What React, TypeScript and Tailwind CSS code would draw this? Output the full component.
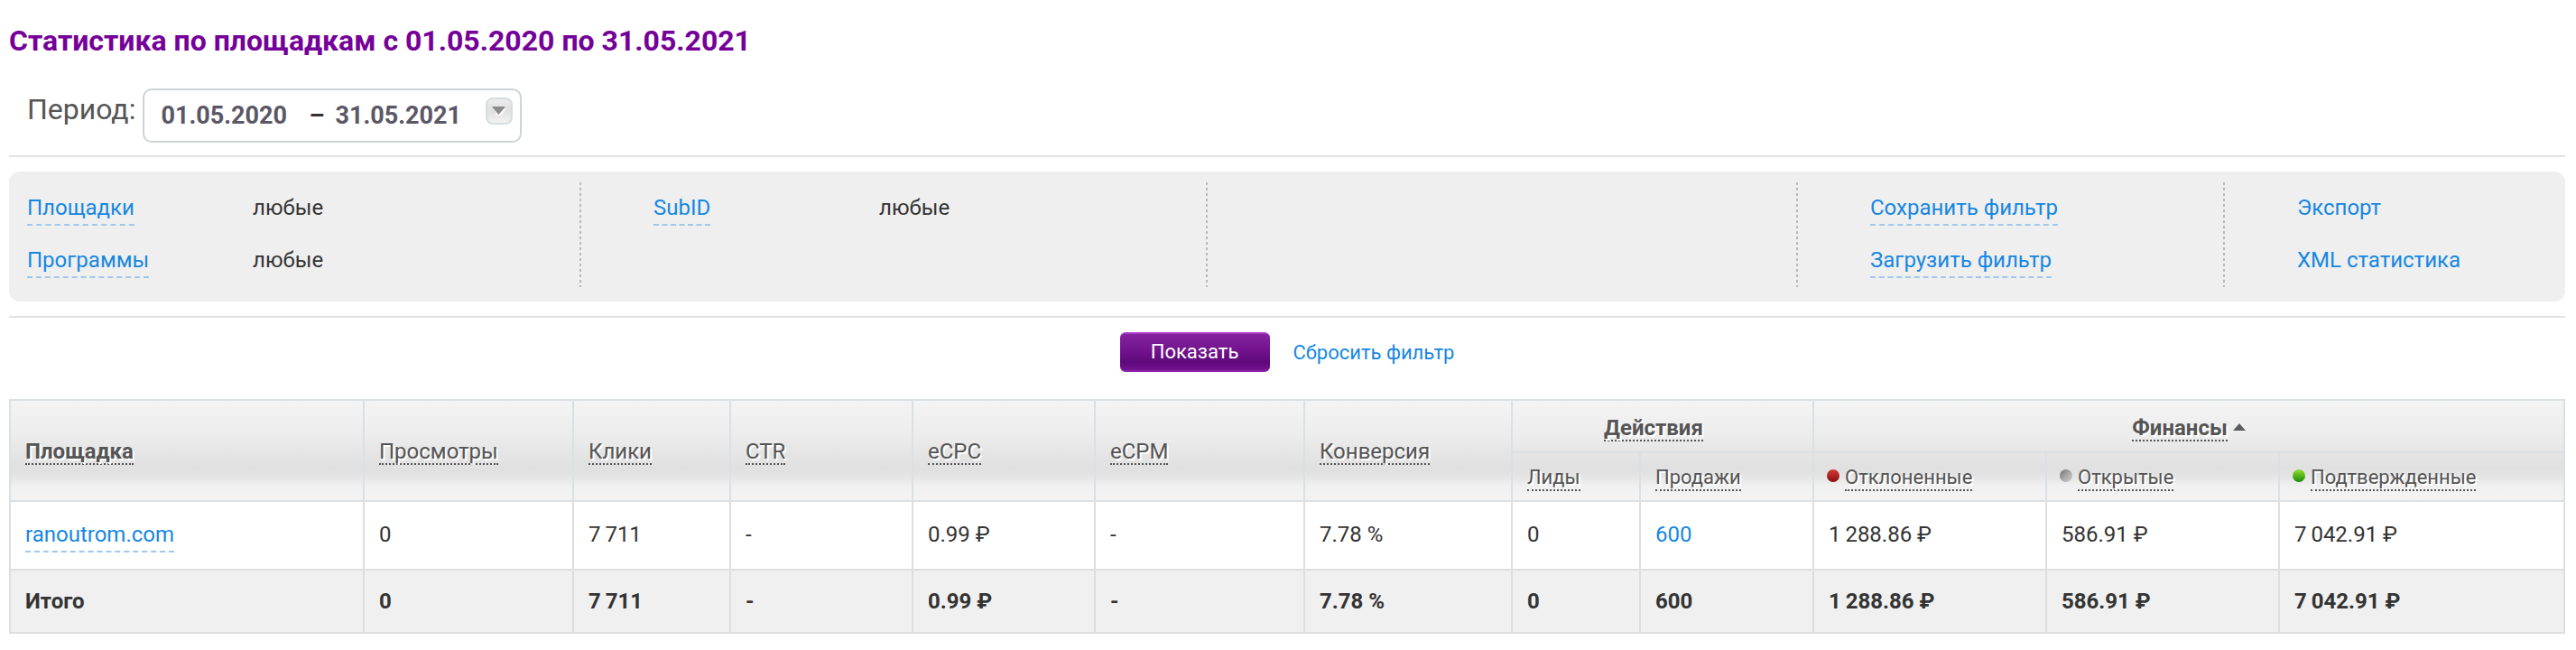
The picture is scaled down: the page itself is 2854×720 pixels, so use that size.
import type { ReactNode } from "react";

const COLUMN_WIDTHS = [
  "w-[392px]", "w-[232px]", "w-[174px]", "w-[202px]", "w-[202px]", "w-[232px]",
  "w-[230px]", "w-[142px]", "w-[192px]", "w-[258px]", "w-[258px]", "w-[316px]",
];

const ROW = ["0", "7\u2009711", "-", "0.99 ₽", "-", "7.78 %", "0", "600", "1\u2009288.86 ₽", "586.91 ₽", "7\u2009042.91 ₽"];

function DashedLink({ children }: { children: ReactNode }) {
  return (
    <a href="#" className="inline-block border-b-2 border-dashed border-[#a0c8ee] leading-9 text-[#1787e0]">
      {children}
    </a>
  );
}

function PlainLink({ children }: { children: ReactNode }) {
  return (
    <a href="#" className="inline-block leading-9 text-[#1787e0]">
      {children}
    </a>
  );
}

function FilterRow({ name }: { name: string }) {
  return (
    <div className="flex h-[58px] items-start">
      <div className="w-[250px]">
        <DashedLink>{name}</DashedLink>
      </div>
      <span className="leading-9">любые</span>
    </div>
  );
}

function Divider() {
  return (
    <div className="w-0.5 shrink-0 bg-[repeating-linear-gradient(to_bottom,#b9b9b9_0px,#b9b9b9_3px,transparent_3px,transparent_6px)]" />
  );
}

function FilterColumn({ first, last, children }: { first?: boolean; last?: boolean; children?: ReactNode }) {
  return (
    <div className="flex h-[116px]">
      <div className={`flex-1 pt-2.5 ${first ? "pl-5" : "pl-20"}`}>{children}</div>
      {!last && <Divider />}
    </div>
  );
}

function Sortable({ bold, children }: { bold?: boolean; children: ReactNode }) {
  return (
    <button
      type="button"
      className={`inline-block border-b-2 border-dotted border-[#555] leading-[26px] [text-shadow:2px_2px_0_#fff] ${bold ? "font-bold" : "font-normal"}`}
    >
      {children}
    </button>
  );
}

const headCell = "border-2 border-[#dbe0e4] px-4 text-left align-middle";

function MainHead({ bold, children }: { bold?: boolean; children: ReactNode }) {
  return (
    <th rowSpan={2} scope="col" className={`${headCell} pt-0.5`}>
      <Sortable bold={bold}>{children}</Sortable>
    </th>
  );
}

function SubHead({ dot, children }: { dot?: string; children: ReactNode }) {
  return (
    <th scope="col" className={`h-[54px] pt-1 text-[22px] ${headCell}`}>
      <div className="flex items-start gap-1.5">
        {dot && <span className={`mt-1 -ml-0.5 size-3.5 shrink-0 rounded-full ${dot}`} />}
        <Sortable>{children}</Sortable>
      </div>
    </th>
  );
}

function GroupHead({ span, sorted, children }: { span: number; sorted?: boolean; children: ReactNode }) {
  return (
    <th colSpan={span} scope="colgroup" className="h-[58px] border-2 border-[#dbe0e4] pt-1.5 align-middle">
      <div className="flex items-start justify-center gap-1.5">
        <Sortable bold>{children}</Sortable>
        <svg viewBox="0 0 14 8" className="mt-2 h-2 w-3.5" aria-hidden="true">
          {sorted && <path d="M0 8 L7 0 L14 8 Z" fill="#5c5c5c" />}
        </svg>
      </div>
    </th>
  );
}

const bodyCell = "border-2 border-[#dedede] px-4 align-middle";

export default function App() {
  return (
    <main className="bg-white pt-[25px] pr-3 pl-2.5 font-[Roboto,sans-serif] text-[24px] text-[#333]">
      <h1 className="text-[32px] leading-10 font-bold text-[#750099]">
        Статистика по площадкам с 01.05.2020 по 31.05.2021
      </h1>

      <div className="mt-[33px] flex items-start gap-2 pl-5">
        <label htmlFor="date-from" className="text-[32px] leading-[46px] text-[#555]">
          Период:
        </label>
        <div className="flex h-[60px] w-[420px] items-center rounded-[10px] border-2 border-[#cdd3d8] pl-[18px] text-[27px] font-bold text-[#5b5766]">
          <input id="date-from" aria-label="Дата начала" defaultValue="01.05.2020" className="w-[164px] outline-none" />
          <span className="w-[29px] text-[#333]">–</span>
          <input id="date-to" aria-label="Дата окончания" defaultValue="31.05.2021" className="w-[167px] outline-none" />
          <button
            type="button"
            aria-label="Открыть календарь"
            className="mt-2 flex size-[30px] items-center justify-center self-start rounded-lg border-2 border-[#d6dde0] bg-linear-to-b from-[#ececec] via-[#e0e0e0] to-[#f3f3f3]"
          >
            <svg viewBox="0 0 16 10" className="h-2.5 w-4" aria-hidden="true">
              <path d="M3 9 L10 10 L16 2 Z" fill="#fff" />
              <path d="M0 0 H15 L7.5 9 Z" fill="#8b8b8b" />
            </svg>
          </button>
        </div>
      </div>

      <hr className="mt-3.5 border-t-2 border-[#e2e2e2]" />

      <section className="mt-4 grid h-36 grid-cols-[634fr_694fr_654fr_473fr_377fr] rounded-[12px] bg-[#efefef] pt-3">
        <FilterColumn first>
          <FilterRow name="Площадки" />
          <FilterRow name="Программы" />
        </FilterColumn>
        <FilterColumn>
          <FilterRow name="SubID" />
        </FilterColumn>
        <FilterColumn />
        <FilterColumn>
          <div className="h-[58px]"><DashedLink>Сохранить фильтр</DashedLink></div>
          <div className="h-[58px]"><DashedLink>Загрузить фильтр</DashedLink></div>
        </FilterColumn>
        <FilterColumn last>
          <div className="h-[58px]"><PlainLink>Экспорт</PlainLink></div>
          <div className="h-[58px]"><PlainLink>XML статистика</PlainLink></div>
        </FilterColumn>
      </section>

      <hr className="mt-4 border-t-2 border-[#e2e2e2]" />

      <div className="mt-4 flex items-center justify-center gap-[26px] text-[22px]">
        <button
          type="button"
          className="h-11 w-[166px] rounded-md border-t-2 border-b-2 border-t-[#a93bc4] border-b-[#8a22a6] bg-[linear-gradient(to_bottom,#86229f_0%,#6f128c_50%,#5f087b_78%,#72148f_100%)] leading-10 text-white"
        >
          Показать
        </button>
        <a href="#" className="text-[#1787e0]">Сбросить фильтр</a>
      </div>

      <table className="mt-[30px] w-full table-fixed border-collapse">
        <colgroup>
          {COLUMN_WIDTHS.map((width, i) => (
            <col key={i} className={width} />
          ))}
        </colgroup>
        <thead className="bg-[linear-gradient(to_bottom,#f4f4f4_0%,#ececec_37%,#e6e6e6_50%,#e0e0e0_69%,#e5e5e5_76%,#f1f1f1_86%,#f3f3f3_100%)] text-[#555]">
          <tr>
            <MainHead bold>Площадка</MainHead>
            <MainHead>Просмотры</MainHead>
            <MainHead>Клики</MainHead>
            <MainHead>CTR</MainHead>
            <MainHead>eCPC</MainHead>
            <MainHead>eCPM</MainHead>
            <MainHead>Конверсия</MainHead>
            <GroupHead span={2}>Действия</GroupHead>
            <GroupHead span={3} sorted>Финансы</GroupHead>
          </tr>
          <tr>
            <SubHead>Лиды</SubHead>
            <SubHead>Продажи</SubHead>
            <SubHead dot="bg-linear-to-b from-[#cf3a36] to-[#8c0d10]">Отклоненные</SubHead>
            <SubHead dot="bg-linear-to-br from-[#6c6c6c] via-[#a8a8a8] to-[#cfcfcf]">Открытые</SubHead>
            <SubHead dot="bg-linear-to-b from-[#8ee02c] to-[#128a10]">Подтвержденные</SubHead>
          </tr>
        </thead>
        <tbody>
          <tr>
            <td className={`h-[76px] ${bodyCell}`}>
              <DashedLink>ranoutrom.com</DashedLink>
            </td>
            {ROW.map((value, i) => (
              <td key={i} className={`pb-0.5 ${bodyCell}`}>
                {i === 7 ? <a href="#" className="text-[#1787e0]">{value}</a> : value}
              </td>
            ))}
          </tr>
        </tbody>
        <tfoot className="bg-[#f0f0f0] font-bold">
          <tr>
            <th scope="row" className={`h-[70px] text-left ${bodyCell}`}>Итого</th>
            {ROW.map((value, i) => (
              <td key={i} className={bodyCell}>{value}</td>
            ))}
          </tr>
        </tfoot>
      </table>
    </main>
  );
}
